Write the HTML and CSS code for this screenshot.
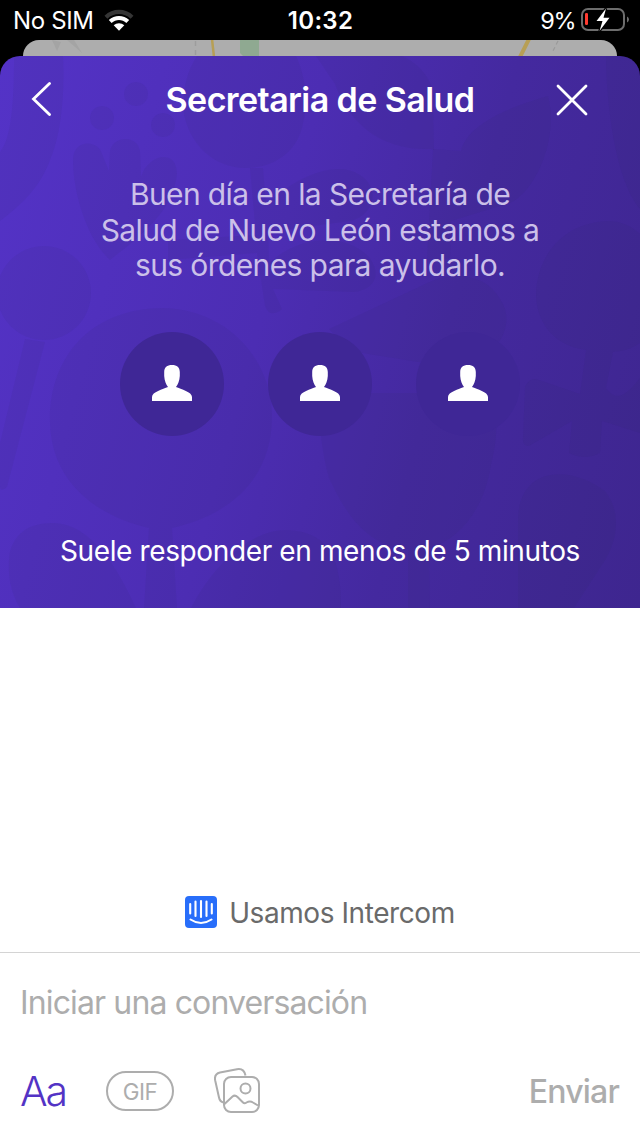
FILE: index.html
```html
<!DOCTYPE html>
<html lang="es">
<head>
<meta charset="utf-8">
<title>Secretaria de Salud</title>
<link rel="stylesheet" href="styles.css">
</head>
<body>
<div class="screen">
  <div class="status">
    <div class="status-left">
      <span class="carrier">No SIM</span>
      <svg class="wifi" width="30" height="22" viewBox="0 0 30 22">
        <path d="M0.5 6.7C8.5-1.1 21.5-1.1 29.5 6.7L26.6 9.7C20.1 3.5 9.9 3.5 3.4 9.7Z" fill="#353535"/>
        <path d="M4.8 11.1C10.5 5.7 19.5 5.7 25.2 11.1L22.4 14C18.2 10.1 11.8 10.1 7.6 14Z" fill="#fff"/>
        <path d="M9.7 16.2C12.7 13.5 17.3 13.5 20.3 16.2L15 21.7Z" fill="#fff"/>
      </svg>
    </div>
    <span class="clock">10:32</span>
    <div class="status-right">
      <span class="percent">9%</span>
      <svg class="battery" width="48" height="26" viewBox="0 0 48 26">
        <rect x="1" y="2" width="42" height="21" rx="6" fill="none" stroke="#6d6d6d" stroke-width="2"/>
        <path d="M46 9.5Q48 10.5 48 12.5Q48 14.500 46 15.500Z" fill="#6d6d6d"/>
        <rect x="4" y="6" width="3" height="12" rx="1.3" fill="#ff3b30"/>
        <path d="M25 1.500L15.500 14H21.500L18.500 24L28.500 10.800H22.500Z" fill="#fff" stroke="#000" stroke-width="2.500" paint-order="stroke"/>
      </svg>
    </div>
  </div>
  <div class="back-sheet">
    <svg width="594" height="16" viewBox="23 40 594 16">
      <path d="M52 40L57 51L61 42ZM67 40L82 53L74 40Z" fill="#a4a4a4"/>
      <path d="M195.500 41V56" stroke="#9d9d9d" stroke-width="1.500" stroke-dasharray="5 4"/>
      <path d="M212 39L214 57" stroke="#b79f55" stroke-width="2.500"/>
      <path d="M240 40H259V56H243L240 53Z" fill="#8fa991"/>
      <path d="M529 39L520 57" stroke="#b79f55" stroke-width="4"/>
      <path d="M558 41L552 53" stroke="#9a9a9a" stroke-width="1.200" stroke-dasharray="4 3"/>
    </svg>
  </div>
  <header class="hero">
    <svg class="pattern" width="640" height="552" viewBox="0 56 640 552">
      <g fill="#2f2450" fill-opacity=".07">
        <path d="M14 56H63C65 95 61 135 50 160C40 188 20 206 0 221V152C13 137 14 90 14 56Z"/>
        <circle cx="136" cy="94" r="12"/><circle cx="102" cy="118" r="12"/><circle cx="163" cy="125" r="12"/>
        <path d="M73 160C73 138 99 140 102 154L109 171L110 151C113 135 138 135 140 151L141 177C148 154 177 148 177 174C173 214 135 240 110 260C88 240 73 195 73 160Z"/>
        <path d="M197 56H296C306 77 308 103 303 123C298 153 272 168 246 168C211 168 189 141 184 114C182 94 186 72 197 56Z"/>
        <path d="M250 168L263 168L266 205C295 177 336 159 360 175C382 189 373 216 350 221L268 232L269 263C300 235 345 232 369 257C384 277 371 291 353 292L273 289L282 309Q270 319 265 306L257 253L168 260V240L256 235Z"/>
        <path d="M316 56H402C427 67 437 91 433 105L434 150L431 149C378 151 348 120 335 84Z"/>
        <path d="M433 149L461 151C465 132 490 112 548 96C559 138 536 191 510 203L451 221L450 258L427 260Z"/>
        <path d="M606 56H640V209C615 181 606 101 606 56Z"/>
        <circle cx="44" cy="293" r="47"/>
        <path d="M25 339L45 342L7 487Q0 493 0 486V443Z"/>
        <path d="M50 424C48 361 87 309 162 308C230 309 271 362 272 414C273 485 222 517 172 528L177 608H144L149 528C93 515 52 480 50 424Z"/>
        <path d="M9 559C11 533 31 522 54 523C91 524 118 568 136 608H20C10 592 8 575 9 559Z"/>
        <path d="M191 608C210 570 249 528 289 530C332 533 341 563 341 608Z"/>
        <path d="M329 329L421 286C450 270 485 272 500 299C516 321 501 355 467 364L418 362L350 351Z"/>
        <path d="M345 393L491 393C497 416 499 432 491 465C484 510 459 540 429 548L430 608H408V549C368 546 347 517 329 478C320 445 318 414 322 400Z"/>
        <path d="M609 221C674 223 685 349 613 352L606 388C618 405 629 391 640 378V433L602 421L600 453Q585 461 569 453L572 421L529 446Q522 447 523 437L525 387Q530 375 542 381L580 394L586 350C550 345 536 318 536 294C537 255 564 222 609 221Z"/>
        <path d="M518 608V519C519 467 569 464 605 491C622 512 618 542 602 565L574 608Z"/>
      </g>
    </svg>
    <div class="nav">
      <svg class="back" width="20" height="36" viewBox="0 0 20 36"><path d="M18.500 2.500L2.500 18L18.500 33.500" fill="none" stroke="#fff" stroke-width="2.800" stroke-linecap="round"/></svg>
      <h1 class="title">Secretaria de Salud</h1>
      <svg class="close" width="32" height="32" viewBox="0 0 32 32"><path d="M2 2L30 30M30 2L2 30" stroke="#fff" stroke-width="2.800" stroke-linecap="round"/></svg>
    </div>
    <p class="intro">Buen día en la Secretaría de<br>Salud de Nuevo León estamos a<br>sus órdenes para ayudarlo.</p>
    <div class="avatars">
      <div class="avatar"><svg width="40" height="36" viewBox="0 0 40 36"><path d="M20 0C25 0 27.800 2.500 27.800 7V11C27.500 16 25.800 19.500 24 22C29 24 40 27 40 32V36H0V32C0 27 11 24 16 22C14.200 19.500 12.500 16 12.200 11V7C12.200 2.500 15 0 20 0Z" fill="#fff"/></svg></div>
      <div class="avatar"><svg width="40" height="36" viewBox="0 0 40 36"><path d="M20 0C25 0 27.800 2.500 27.800 7V11C27.500 16 25.800 19.500 24 22C29 24 40 27 40 32V36H0V32C0 27 11 24 16 22C14.200 19.500 12.500 16 12.200 11V7C12.200 2.500 15 0 20 0Z" fill="#fff"/></svg></div>
      <div class="avatar"><svg width="40" height="36" viewBox="0 0 40 36"><path d="M20 0C25 0 27.800 2.500 27.800 7V11C27.500 16 25.800 19.500 24 22C29 24 40 27 40 32V36H0V32C0 27 11 24 16 22C14.200 19.500 12.500 16 12.200 11V7C12.200 2.500 15 0 20 0Z" fill="#fff"/></svg></div>
    </div>
    <p class="reply-time">Suele responder en menos de 5 minutos</p>
  </header>
  <main class="conversation">
    <div class="powered">
      <svg width="32" height="32" viewBox="0 0 32 32"><rect width="32" height="32" rx="4" fill="#286efa"/><path d="M5.200 8V17.500M10.500 5.500V20M16 5V21M21.500 5.500V20M26.800 8V17.500M5.500 23.500Q16 30.500 26.500 23.500" fill="none" stroke="#fff" stroke-width="2.100" stroke-linecap="round"/></svg>
      <span class="powered-label">Usamos Intercom</span>
    </div>
  </main>
  <footer class="composer">
    <div class="placeholder">Iniciar una conversación</div>
    <div class="tools">
      <span class="text-tool">Aa</span>
      <span class="gif">GIF</span>
      <svg class="gallery" width="46" height="46" viewBox="0 0 46 46" fill="none" stroke="#adadad" stroke-width="2">
        <path d="M9.500 34.500C7 34 5.500 32 5 29.500L1.200 12.500C.4 8.500 2 5.500 6 4.500L23 1.200C27.500.4 30.500 2.500 31.500 7.500"/>
        <rect x="10" y="9" width="35" height="35" rx="7"/>
        <circle cx="31.500" cy="20.500" r="5"/>
        <path d="M10.500 36L18.500 28.500Q21 26.500 23.500 29L29 34.500Q30.500 36 32.500 34.500Q36 32.500 39 34.500L44 37.500"/>
      </svg>
      <span class="send">Enviar</span>
    </div>
  </footer>
</div>
</body>
</html>
```
FILE: styles.css
```css
* { box-sizing: border-box; }
body { margin: 0; background: #000; font-family: Inter, "Liberation Sans", sans-serif; }
svg { display: block; flex: none; }
.screen { width: 640px; height: 1136px; display: flex; flex-direction: column; overflow: hidden; white-space: nowrap; }
.status { height: 40px; flex: none; display: grid; grid-template-columns: 1fr auto 1fr; align-items: center; padding: 0 11px 0 13px; color: #fff; font-size: 24px; line-height: 40px; }
.status-left, .status-right { display: flex; align-items: center; }
.status-left { gap: 10px; }
.status-right { justify-content: flex-end; gap: 6px; }
.carrier, .clock, .percent { padding-top: 2px; line-height: 38px; }
.carrier { letter-spacing: -.35px; }
.clock { font-weight: 600; letter-spacing: .3px; margin-left: -1px; }
.percent { font-size: 23.500px; letter-spacing: -1.500px; }
.back-sheet { height: 16px; flex: none; margin: 0 23px; background: #adadad; border-radius: 18px 18px 0 0; overflow: hidden; }
.hero { position: relative; height: 552px; flex: none; display: flex; flex-direction: column; align-items: center; border-radius: 20px 20px 0 0; overflow: hidden; color: #fff; background: linear-gradient(105deg, #5433c7 0%, #4c2db3 42%, #44299f 66%, #3e268f 100%); }
.pattern { position: absolute; inset: 0; }
.nav, .intro, .avatars, .reply-time { position: relative; }
.nav { width: 100%; height: 88px; display: grid; grid-template-columns: 1fr auto 1fr; align-items: center; padding: 0 52px 0 31px; }
.back { margin-bottom: 2px; }
.title { margin: 0 -21px 0 0; font-size: 34px; font-weight: 600; line-height: 40px; letter-spacing: -.58px; }
.close { justify-self: end; }
.intro { margin: 33px 0 0; text-align: center; font-size: 30px; line-height: 35.6px; letter-spacing: -.61px; color: #cbc0e9; }
.avatars { display: flex; gap: 44px; margin-top: 48px; }
.avatar { width: 104px; height: 104px; border-radius: 50%; background: #3f2796; display: flex; align-items: center; justify-content: center; padding-bottom: 1px; }
.reply-time { margin: 98px 0 0; font-size: 28px; line-height: 34px; letter-spacing: -.38px; }
.conversation { height: 344px; flex: none; background: #fff; display: flex; align-items: flex-end; justify-content: center; padding-bottom: 23px; }
.powered { display: flex; align-items: center; gap: 12px; color: #6a6a6a; font-size: 28px; line-height: 34px; letter-spacing: -.42px; }
.powered-label { padding-top: 2px; line-height: 32px; }
.composer { flex: 1; background: #fff; border-top: 1px solid #d4d4d4; padding: 30px 20px 0; }
.placeholder { font-size: 32px; line-height: 40px; letter-spacing: -.87px; color: #adadad; }
.tools { height: 60px; margin-top: 38px; display: flex; align-items: center; }
.text-tool { width: 86px; font-size: 41px; font-weight: 300; letter-spacing: -2px; color: #5333c5; }
.gif { width: 68px; height: 40px; border: 2px solid #adadad; border-radius: 20px; display: flex; align-items: center; justify-content: center; color: #adadad; font-size: 22.500px; letter-spacing: -.6px; }
.gallery { margin-left: 40px; }
.send { margin-left: auto; padding-right: 1px; font-size: 32px; font-weight: 500; letter-spacing: -.8px; color: #adadad; }
```
